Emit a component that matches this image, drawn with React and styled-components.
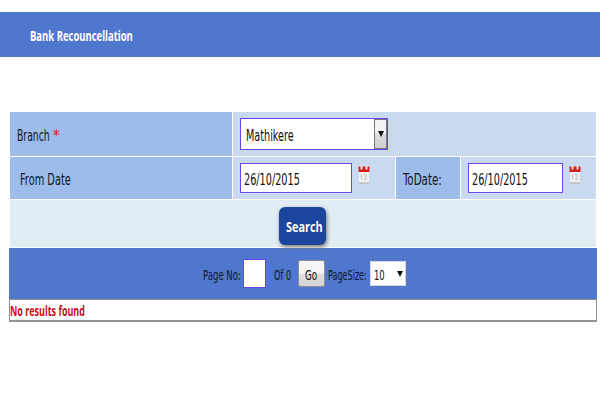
import React, { useLayoutEffect, useRef, useState } from "react";
import styled, { createGlobalStyle } from "styled-components";

const GlobalStyle = createGlobalStyle`
  * { box-sizing: border-box; }
  body {
    margin: 0;
    background: #fff;
    color: #101722;
    font-family: "DejaVu Sans Condensed", "DejaVu Sans", sans-serif;
  }
`;

const Page = styled.div`
  width: 600px;
  height: 400px;
  padding-top: 12px;
  overflow: hidden;
`;

const Header = styled.header`
  display: flex;
  align-items: center;
  height: 45px;
  padding: 1px 0 0 30px;
  background: #4e77cd;
  color: #fff;
  font-family: "Open Sans", sans-serif;
`;

const Panel = styled.main`
  width: 588px;
  margin: 55px 0 0 9px;
`;

const FormGrid = styled.div`
  display: grid;
  grid-template-columns: 222px 162px 64px 135px;
  grid-template-rows: 44px 42px 47px;
  gap: 1px;
  padding-left: 1px;
`;

const Cell = styled.div`
  display: flex;
  align-items: center;
  grid-column: span ${(p) => p.$span || 1};
  padding-left: ${(p) => p.$indent || 0}px;
  background: ${(p) => (p.$label ? "#9ebce9" : "#c8d9f0")};
`;

const ActionCell = styled.div`
  display: flex;
  align-items: flex-start;
  grid-column: 1 / -1;
  padding: 7px 0 0 269px;
  background: #e1edf5;
`;

const TextSlot = styled.span`
  display: inline-block;
  flex: none;
  width: ${(p) => p.$width}px;
  margin-top: ${(p) => p.$drop || 0}px;
  line-height: 20px;
  font-size: ${(p) => p.$size || 15}px;
  font-weight: ${(p) => (p.$bold ? 700 : 400)};
  color: ${(p) => p.$color || "inherit"};
  white-space: pre;
`;

const TextInner = styled.span`
  display: inline-block;
  transform-origin: 0 50%;
`;

// Narrow lettering: the text is condensed to the given width.
function Condensed({ width, size, bold, color, drop, children }) {
  const ref = useRef(null);
  const [scale, setScale] = useState(1);
  useLayoutEffect(() => {
    setScale(width / ref.current.offsetWidth);
  }, [width, children]);
  return (
    <TextSlot $width={width} $size={size} $bold={bold} $color={color} $drop={drop}>
      <TextInner ref={ref} style={{ transform: `scaleX(${scale})` }}>
        {children}
      </TextInner>
    </TextSlot>
  );
}

const Required = styled.span`
  display: flex;
  margin-left: 3px;
`;

const Field = styled.div`
  display: flex;
  align-items: center;
  flex: none;
  width: ${(p) => p.$width}px;
  height: ${(p) => p.$height || 30}px;
  padding-left: ${(p) => p.$indent || 3}px;
  border: 1px solid #6945ed;
  background: #fff;
  color: #111;
`;

const SelectArrow = styled.span`
  display: flex;
  align-items: center;
  justify-content: center;
  width: 13px;
  height: 30px;
  margin-left: auto;
  border: 1px solid #77767d;
  background: linear-gradient(#f3f3f3 0 48%, #dcdcdc 52%, #cfcfcf);
`;

const Triangle = styled.span`
  width: 0;
  height: 0;
  border: solid transparent;
  border-width: 6px 3px 0;
  border-top-color: #111;
`;

const CalendarSvg = styled.svg`
  display: block;
  flex: none;
  margin: -7px 0 0 ${(p) => p.$gap}px;
`;

function Calendar({ gap }) {
  return (
    <CalendarSvg $gap={gap} width="12" height="19" viewBox="0 0 12 19">
      <path d="M1 3H11V18H1Z" fill="#f1efee" />
      <path d="M.5 1.5H11.5V7H.5Z" fill="#d71d1d" />
      <path d="M2.5 .5H4.5V4.5H2.5ZM7.5 .5H9.5V4.5H7.5Z" fill="#eee5e5" />
      <path d="M3.5 9.5V14.5M5.5 9.5H8V12L6.5 14.5H8.5" fill="none" stroke="#b5b3b5" strokeWidth=".8" />
      <path d="M1 18H11" stroke="#aca7a7" />
    </CalendarSvg>
  );
}

const SearchButton = styled.div`
  display: flex;
  align-items: center;
  width: 47px;
  height: 38px;
  padding-left: 7px;
  border-radius: 6px;
  background: #1c469d;
  color: #fff;
  box-shadow: 1px 2px 4px #837b70;
  position: relative;
  font-family: "Open Sans", sans-serif;
`;

const Pager = styled.div`
  display: flex;
  align-items: center;
  height: 51px;
  margin-top: 1px;
  padding-left: 194px;
  background: #4e77cd;
`;

const PageField = styled.div`
  width: 23px;
  height: 29px;
  margin: -1px 8px 0 2px;
  border: 1px solid #6945ed;
  background: #fff;
`;

const GoButton = styled.div`
  display: flex;
  align-items: center;
  width: 27px;
  height: 27px;
  margin: 0 3px 0 7px;
  padding-left: 6px;
  border: 1px solid #8b8c91;
  border-radius: 2px;
  background: linear-gradient(#f6f6f6 0 45%, #dfdfdf 55%, #d2d2d2);
  color: #111;
`;

const SizeSelect = styled.div`
  display: flex;
  align-items: center;
  gap: 12px;
  width: 36px;
  height: 25px;
  margin: 0 0 0 3px;
  padding-left: 3px;
  border: 1px solid #d7d4de;
  background: #fff;
  color: #111;
`;

const Results = styled.div`
  display: flex;
  align-items: center;
  height: 23px;
  border: 1px solid #929292;
  border-bottom-width: 2px;
  font-family: "Open Sans", sans-serif;
`;

export default function App() {
  return (
    <>
      <GlobalStyle />
      <Page>
        <Header>
          <Condensed width={103} size={15} bold>Bank Recouncellation</Condensed>
        </Header>
        <Panel>
          <FormGrid>
            <Cell $label $indent={7}>
              <Condensed width={33} drop={3}>Branch</Condensed>
              <Required><Condensed width={7} color="#f01212" drop={3}>*</Condensed></Required>
            </Cell>
            <Cell $span={3} $indent={7}>
              <Field $width={148} $height={32} $indent={5}>
                <Condensed width={48} drop={3}>Mathikere</Condensed>
                <SelectArrow><Triangle /></SelectArrow>
              </Field>
            </Cell>
            <Cell $label $indent={10}>
              <Condensed width={51} drop={4}>From Date</Condensed>
            </Cell>
            <Cell $indent={7}>
              <Field $width={112}>
                <Condensed width={56} drop={3}>26/10/2015</Condensed>
              </Field>
              <Calendar gap={6} />
            </Cell>
            <Cell $label $indent={7}>
              <Condensed width={39} drop={4}>ToDate:</Condensed>
            </Cell>
            <Cell $indent={7}>
              <Field $width={95}>
                <Condensed width={56} drop={3}>26/10/2015</Condensed>
              </Field>
              <Calendar gap={6} />
            </Cell>
            <ActionCell>
              <SearchButton><Condensed width={37} size={15} bold>Search</Condensed></SearchButton>
            </ActionCell>
          </FormGrid>
          <Pager>
            <Condensed width={38} size={14.5} drop={2}>Page No:</Condensed>
            <PageField />
            <Condensed width={17} size={14.5} drop={2}>Of 0</Condensed>
            <GoButton><Condensed width={12} size={14.5} drop={2}>Go</Condensed></GoButton>
            <Condensed width={39} size={14.5} drop={2}>PageSize:</Condensed>
            <SizeSelect>
              <Condensed width={11} size={14.5} drop={2}>10</Condensed>
              <Triangle />
            </SizeSelect>
          </Pager>
          <Results>
            <Condensed width={75} size={14.5} bold color="#c90b1c" drop={1}>No results found</Condensed>
          </Results>
        </Panel>
      </Page>
    </>
  );
}
